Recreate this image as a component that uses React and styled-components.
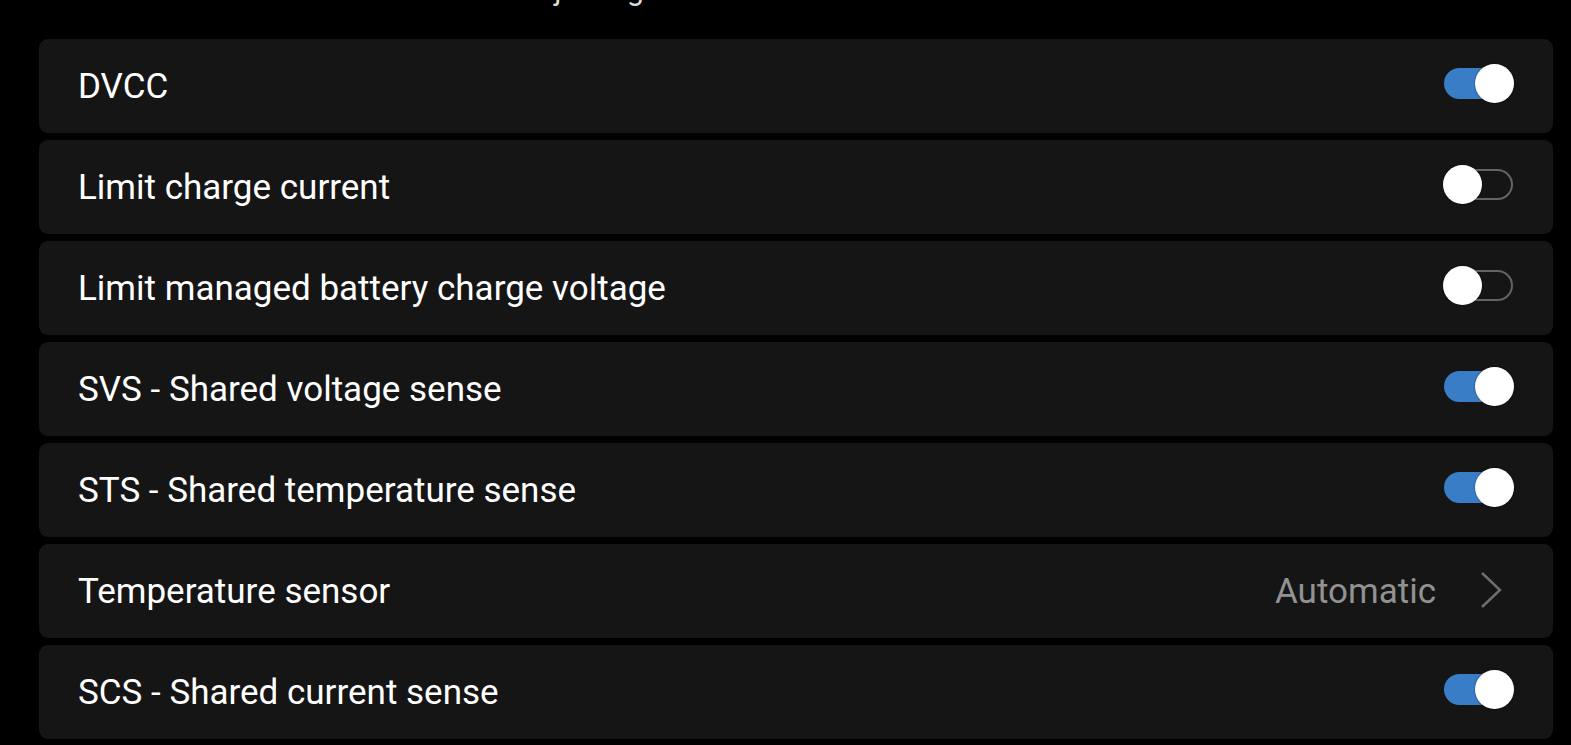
import React from 'react';
import styled, { createGlobalStyle } from 'styled-components';

const GlobalStyle = createGlobalStyle`
  html, body {
    margin: 0;
    padding: 0;
    background: #000;
    overflow: hidden;
  }
  body {
    font-family: Roboto, 'Liberation Sans', sans-serif;
    -webkit-font-smoothing: antialiased;
  }
`;

const Page = styled.div`
  width: 1571px;
  height: 745px;
  background: #000;
  padding: 0 18px 0 39px;
  box-sizing: border-box;
  overflow: hidden;
`;

const Caption = styled.div`
  margin: -28px 0 31px 39px;
  font-size: 30px;
  line-height: 36px;
  color: #dcdcdc;
  white-space: nowrap;
`;

const List = styled.div`
  display: flex;
  flex-direction: column;
  gap: 7px;
`;

const Row = styled.div`
  display: flex;
  align-items: center;
  height: 94px;
  padding: 0 39px;
  background: #151515;
  border-radius: 9px;
  box-sizing: border-box;
`;

const Label = styled.div`
  flex: 1;
  font-size: 35px;
  color: #ffffff;
  white-space: nowrap;
`;

const Value = styled.div`
  font-size: 35px;
  color: #929292;
  margin-right: 44px;
`;

const Switch = styled.div`
  position: relative;
  width: 70px;
  height: 39px;
  margin-bottom: 5px;
`;

const Track = styled.div`
  position: absolute;
  left: 0;
  right: 1px;
  top: 4px;
  height: 31px;
  border-radius: 16px;
  box-sizing: border-box;
  background: ${(p) => (p.$on ? '#3a7dc7' : 'transparent')};
  border: ${(p) => (p.$on ? 'none' : '2px solid #646464')};
`;

const Knob = styled.div`
  position: absolute;
  top: 0;
  ${(p) => (p.$on ? 'right: 0;' : 'left: -1px;')}
  width: 39px;
  height: 39px;
  border-radius: 50%;
  background: #ffffff;
  box-shadow: 0 0 2px rgba(0, 0, 0, 0.6);
`;

const Chevron = styled.svg`
  width: 22px;
  height: 36px;
  margin-right: 12px;
  margin-bottom: 2px;
`;

const Toggle = ({ on }) => (
  <Switch>
    <Track $on={on} />
    <Knob $on={on} />
  </Switch>
);

const items = [
  { label: 'DVCC', on: true },
  { label: 'Limit charge current', on: false },
  { label: 'Limit managed battery charge voltage', on: false },
  { label: 'SVS - Shared voltage sense', on: true },
  { label: 'STS - Shared temperature sense', on: true },
  { label: 'Temperature sensor', value: 'Automatic' },
  { label: 'SCS - Shared current sense', on: true },
];

const App = () => {
  return (
    <>
      <GlobalStyle />
      <Page>
        <Caption>Caution: Read the manual before adjusting.</Caption>
        <List>
          {items.map((item) => (
            <Row key={item.label}>
              <Label>{item.label}</Label>
              {item.value ? (
                <>
                  <Value>{item.value}</Value>
                  <Chevron viewBox="0 0 22 36">
                    <path d="M2 1 L20 18 L2 35" fill="none" stroke="#6e6e6e" strokeWidth="2.5" />
                  </Chevron>
                </>
              ) : (
                <Toggle on={item.on} />
              )}
            </Row>
          ))}
        </List>
      </Page>
    </>
  );
};

export default App;
